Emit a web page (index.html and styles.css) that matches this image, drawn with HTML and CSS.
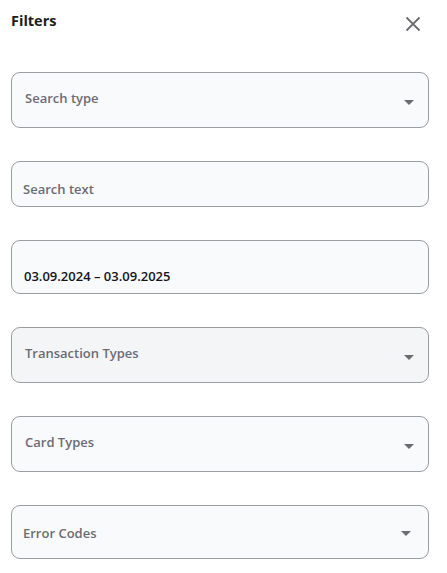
FILE: index.html
```html
<!DOCTYPE html>
<html lang="en">
<head>
<meta charset="utf-8">
<title>Filters</title>
<link rel="stylesheet" href="styles.css">
</head>
<body>
<div class="panel">
  <div class="header">
    <h2 class="title">Filters</h2>
    <button class="close" aria-label="Close">
      <svg width="16" height="16" viewBox="0 0 16 16"><path d="M1.5 1.5 L14.5 14.5 M14.5 1.5 L1.5 14.5" stroke="#6b6b70" stroke-width="1.8" fill="none"/></svg>
    </button>
  </div>
  <div class="fields">
    <div class="field select f1"><span class="label">Search type</span><span class="caret"></span></div>
    <div class="field input f2"><span class="label">Search text</span></div>
    <div class="field input f3"><span class="value">03.09.2024 – 03.09.2025</span></div>
    <div class="field select f4 shaded"><span class="label">Transaction Types</span><span class="caret"></span></div>
    <div class="field select f5"><span class="label">Card Types</span><span class="caret"></span></div>
    <div class="field select f6"><span class="label label-tight">Error Codes</span><span class="caret caret-left"></span></div>
  </div>
</div>
</body>
</html>
```
FILE: styles.css
```css
* { box-sizing: border-box; }
html, body { margin: 0; padding: 0; background: #ffffff; }
body { font-family: "Open Sans", "Noto Sans", sans-serif; }
.panel { width: 447px; padding: 0 18px 0 11px; }
.header { display: flex; justify-content: space-between; align-items: flex-start; height: 72px; }
.title { margin: 11px 0 0 0; font-size: 14.5px; font-weight: 700; color: #1c1c22; line-height: 20px; }
.close { margin: 16px 8px 0 0; padding: 0; border: 0; background: none; width: 16px; height: 16px; display: flex; }
.fields { display: flex; flex-direction: column; gap: 33px; }
.field { display: flex; align-items: center; justify-content: space-between; border: 1px solid #9c9ca2; border-radius: 9px; background: #f9fafb; padding: 0 13px 0 13px; }
.shaded { background: #f4f5f7; }
.label { font-size: 13px; font-weight: 600; color: #6c6c74; }
.label-tight { margin-left: -2px; }
.value { font-size: 13px; font-weight: 600; color: #15151a; }
.caret { width: 0; height: 0; border-left: 5px solid transparent; border-right: 5px solid transparent; border-top: 5px solid #6b6b72; margin-right: 1px; }
.caret-left { margin-right: 4px; }
.f1 { height: 56px; padding-bottom: 4px; }
.f1 .caret { margin-top: 8px; }
.f2 { height: 46px; padding-top: 10px; padding-left: 11px; }
.f3 { height: 54px; padding-top: 18px; padding-left: 12px; }
.f4 { height: 56px; padding-bottom: 4px; }
.f4 .caret { margin-top: 8px; }
.f5 { height: 56px; padding-bottom: 4px; }
.f5 .caret { margin-top: 8px; }
.f6 { height: 54px; padding-top: 2px; }
```
